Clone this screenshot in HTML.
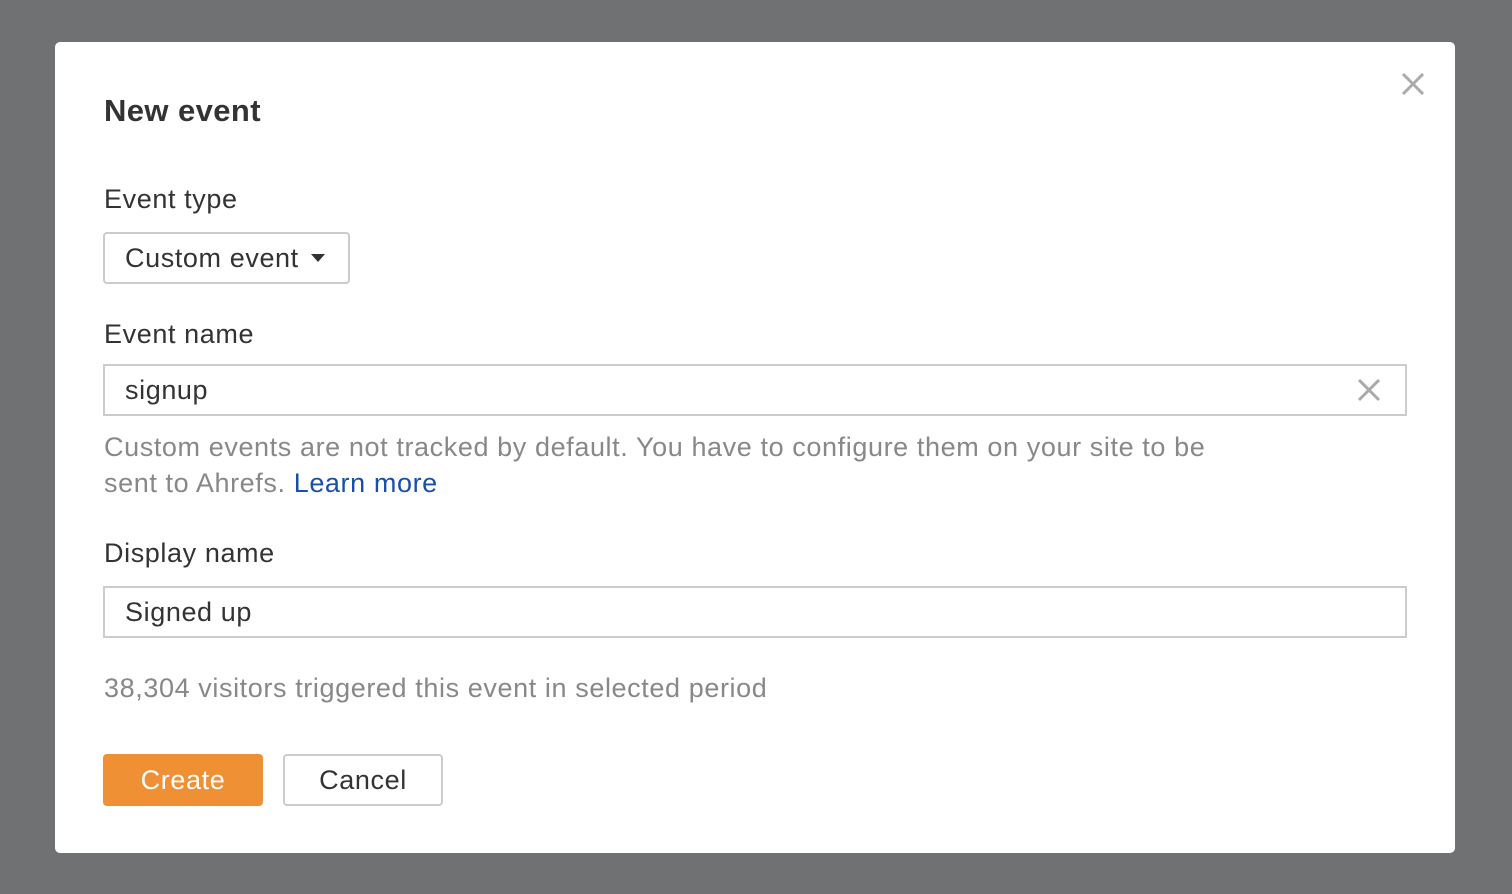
<!DOCTYPE html>
<html><head><style>
*{box-sizing:border-box;margin:0;padding:0}
body{width:1512px;height:894px;background:#707173;font-family:"Liberation Sans",Arial,sans-serif;position:relative;overflow:hidden}
.m{position:absolute;left:55px;top:42px;width:1400px;height:811px;background:#fff;border-radius:5px}
.a{position:absolute;white-space:nowrap}
.t{font-size:31px;font-weight:bold;color:#333;left:104px;top:93px;letter-spacing:0.4px}
.l{font-size:27px;letter-spacing:0.6px;color:#333;left:104px}
.box{position:absolute;border:2px solid #ccc;background:#fff;font-size:27px;letter-spacing:0.6px;color:#333;padding-left:20px;display:flex;align-items:center}
.h{font-size:27px;letter-spacing:0.6px;color:#888;left:104px}
</style></head><body>
<div class="m"></div>
<svg class="a" style="left:1401px;top:72px" width="24" height="24"><path d="M2 2L22 22M22 2L2 22" stroke="#aaa" stroke-width="3"/></svg>
<div class="a t">New event</div>
<div class="a l" style="top:184px">Event type</div>
<div class="box" style="left:103px;top:232px;width:247px;height:52px;border-radius:4px">Custom event<svg style="margin-left:12px" width="14" height="10"><path d="M0 1H14L7 9Z" fill="#333"/></svg></div>
<div class="a l" style="top:319px">Event name</div>
<div class="box" style="left:103px;top:364px;width:1304px;height:52px">signup</div>
<svg class="a" style="left:1357px;top:378px" width="24" height="24"><path d="M2 2L22 22M22 2L2 22" stroke="#aaa" stroke-width="3"/></svg>
<div class="a h" style="top:429px;line-height:36px">Custom events are not tracked by default. You have to configure them on your site to be<br>sent to Ahrefs. <span style="color:#1a4fa8">Learn more</span></div>
<div class="a l" style="top:538px">Display name</div>
<div class="box" style="left:103px;top:586px;width:1304px;height:52px">Signed up</div>
<div class="a h" style="top:673px">38,304 visitors triggered this event in selected period</div>
<div class="box" style="left:103px;top:754px;width:160px;height:52px;border:none;background:#f09035;color:#fff;border-radius:4px;justify-content:center;padding:0">Create</div>
<div class="box" style="left:283px;top:754px;width:160px;height:52px;border-radius:4px;justify-content:center;padding:0">Cancel</div>
</body></html>
